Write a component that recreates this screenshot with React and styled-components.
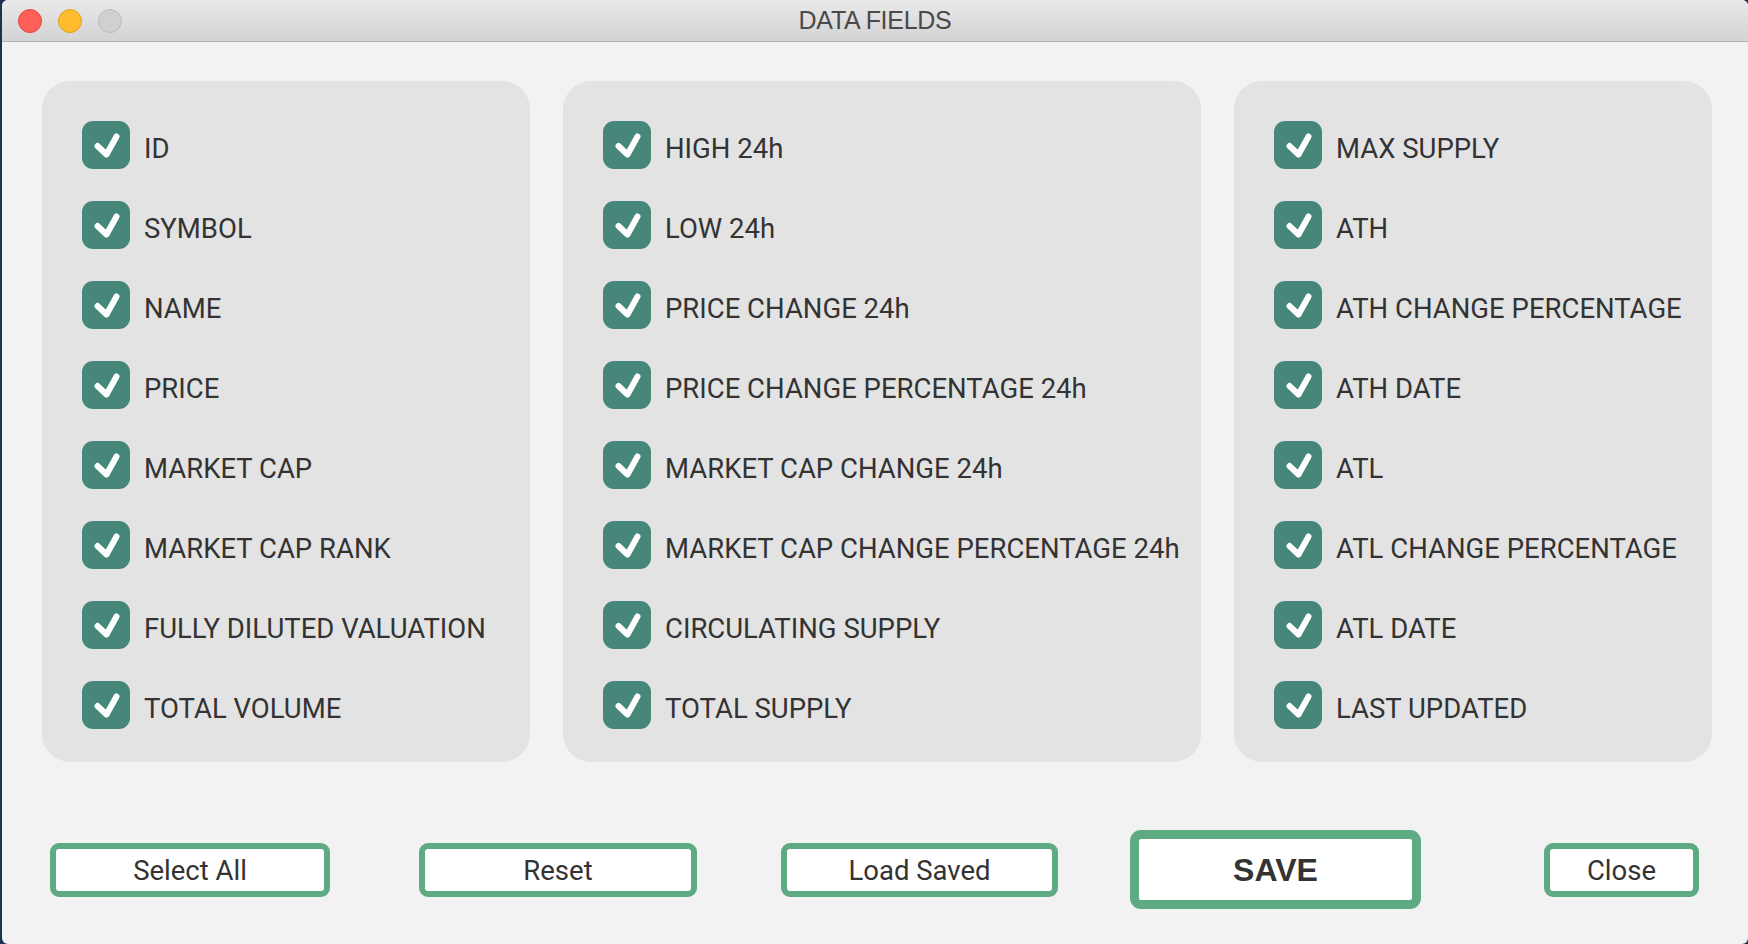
import styled, { createGlobalStyle } from "styled-components";

const GlobalStyle = createGlobalStyle`
  html, body {
    margin: 0;
    padding: 0;
    background: #1c3350;
    overflow: hidden;
  }
  * {
    box-sizing: border-box;
  }
`;

const Window = styled.div`
  width: 1746px;
  height: 944px;
  margin-left: 2px;
  background: #f2f2f2;
  border-radius: 6px;
  overflow: hidden;
  display: flex;
  flex-direction: column;
  font-family: Roboto, "Liberation Sans", sans-serif;
  color: #333333;
`;

const TitleBar = styled.div`
  height: 42px;
  flex-shrink: 0;
  display: grid;
  grid-template-columns: 1fr auto 1fr;
  align-items: center;
  background: linear-gradient(#e9e9e9, #d3d3d3);
  border-bottom: 1px solid #b2b2b2;
`;

const Lights = styled.div`
  display: flex;
  gap: 16px;
  padding-left: 16px;
`;

const Light = styled.span`
  width: 24px;
  height: 24px;
  border-radius: 50%;
  background: ${(props) => props.fill};
  border: 1px solid ${(props) => props.edge};
`;

const Title = styled.div`
  font-family: "Liberation Sans", Arial, sans-serif;
  font-size: 25px;
  color: #4a4a4a;
  letter-spacing: -0.3px;
`;

const Body = styled.div`
  padding: 39px 0 0 40px;
  display: flex;
  flex-direction: column;
`;

const Columns = styled.div`
  display: flex;
  gap: 33px;
`;

const Panel = styled.div`
  width: ${(props) => props.width}px;
  height: 681px;
  background: #e3e3e3;
  border-radius: 28px;
  padding: 40px 0 32px 40px;
  display: flex;
  flex-direction: column;
  gap: 32px;
`;

const Row = styled.label`
  display: flex;
  align-items: center;
  gap: 14px;
  height: 48px;
`;

const Box = styled.span`
  width: 48px;
  height: 48px;
  flex-shrink: 0;
  border-radius: 11px;
  background: #46877a;
  display: flex;
`;

const Label = styled.span`
  font-size: 27.5px;
  padding-top: 7px;
  white-space: nowrap;
  color: #333333;
`;

const Buttons = styled.div`
  display: flex;
  align-items: center;
  margin-top: 68px;
`;

const Button = styled.button`
  width: ${(props) => props.width}px;
  height: ${(props) => (props.primary ? 79 : 54)}px;
  margin-left: ${(props) => props.offset}px;
  background: #ffffff;
  border: ${(props) => (props.primary ? 9 : 6)}px solid #5daa83;
  border-radius: ${(props) => (props.primary ? 11 : 9)}px;
  font-family: ${(props) =>
    props.primary ? '"Liberation Sans", Arial, sans-serif' : "Roboto, sans-serif"};
  font-size: ${(props) => (props.primary ? 32 : 27.5)}px;
  font-weight: ${(props) => (props.primary ? 700 : 400)};
  color: #333333;
  padding: 2px 0 0;
  cursor: pointer;
`;

const columns = [
  {
    width: 488,
    fields: [
      "ID",
      "SYMBOL",
      "NAME",
      "PRICE",
      "MARKET CAP",
      "MARKET CAP RANK",
      "FULLY DILUTED VALUATION",
      "TOTAL VOLUME",
    ],
  },
  {
    width: 638,
    fields: [
      "HIGH 24h",
      "LOW 24h",
      "PRICE CHANGE 24h",
      "PRICE CHANGE PERCENTAGE 24h",
      "MARKET CAP CHANGE 24h",
      "MARKET CAP CHANGE PERCENTAGE 24h",
      "CIRCULATING SUPPLY",
      "TOTAL SUPPLY",
    ],
  },
  {
    width: 478,
    fields: [
      "MAX SUPPLY",
      "ATH",
      "ATH CHANGE PERCENTAGE",
      "ATH DATE",
      "ATL",
      "ATL CHANGE PERCENTAGE",
      "ATL DATE",
      "LAST UPDATED",
    ],
  },
];

const buttons = [
  { text: "Select All", width: 280, offset: 8 },
  { text: "Reset", width: 278, offset: 89 },
  { text: "Load Saved", width: 277, offset: 84 },
  { text: "SAVE", width: 291, offset: 72, primary: true },
  { text: "Close", width: 155, offset: 123 },
];

const Check = () => (
  <svg width="48" height="48" viewBox="0 0 48 48">
    <path
      d="M15.5 25 L24.5 33.5 L34.5 15.5"
      fill="none"
      stroke="#ffffff"
      strokeWidth="6"
      strokeLinecap="round"
      strokeLinejoin="round"
    />
  </svg>
);

const App = () => {
  return (
    <>
      <GlobalStyle />
      <Window>
        <TitleBar>
          <Lights>
            <Light fill="#fe5f57" edge="#e2463f" />
            <Light fill="#febc2e" edge="#e1a116" />
            <Light fill="#d0d0d0" edge="#bcbcbc" />
          </Lights>
          <Title>DATA FIELDS</Title>
          <div />
        </TitleBar>
        <Body>
          <Columns>
            {columns.map((col, i) => (
              <Panel key={i} width={col.width}>
                {col.fields.map((field) => (
                  <Row key={field}>
                    <Box>
                      <Check />
                    </Box>
                    <Label>{field}</Label>
                  </Row>
                ))}
              </Panel>
            ))}
          </Columns>
          <Buttons>
            {buttons.map((b) => (
              <Button
                key={b.text}
                width={b.width}
                offset={b.offset}
                primary={b.primary}
              >
                {b.text}
              </Button>
            ))}
          </Buttons>
        </Body>
      </Window>
    </>
  );
};

export default App;
